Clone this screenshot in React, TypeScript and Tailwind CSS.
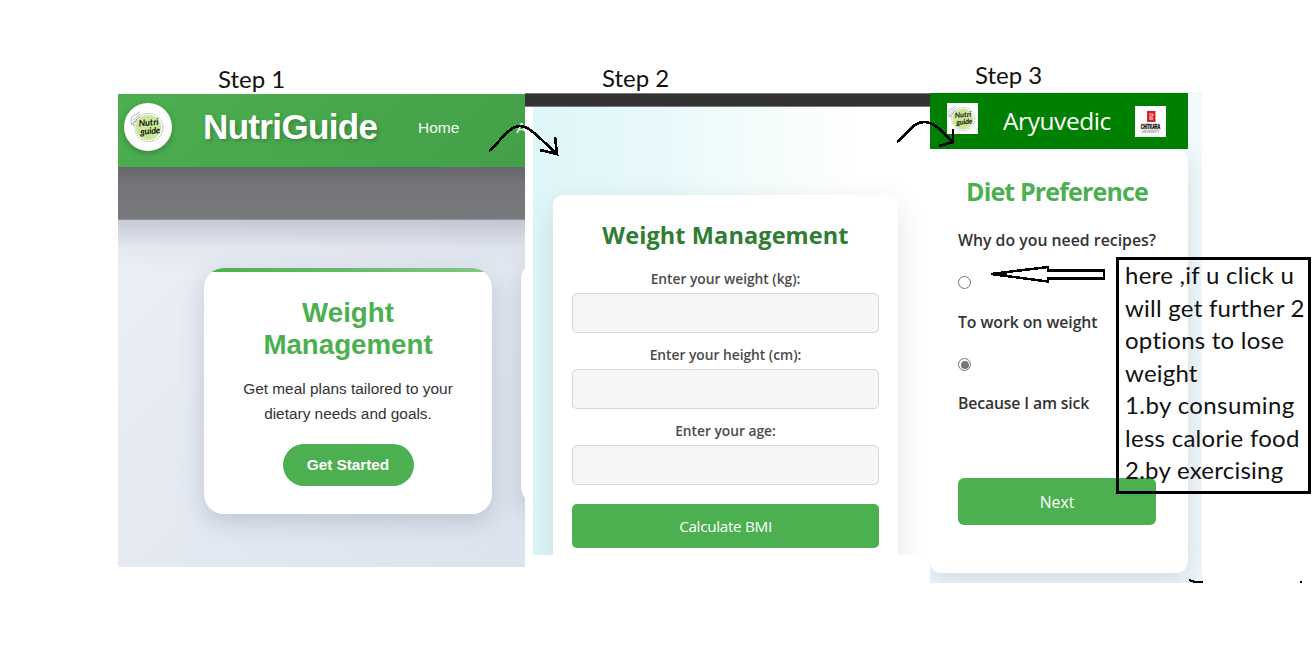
import React from 'react';

const sans = "font-['Open_Sans','Noto_Sans',sans-serif]";
const hand = "font-['Lato',sans-serif]";

function StepLabel({ className, children }: { className: string; children: React.ReactNode }) {
  return (
    <div className={`${hand} whitespace-nowrap text-[24px] leading-8 text-[#111] ${className}`}>{children}</div>
  );
}

function NutriLogo({ className }: { className: string }) {
  return (
    <svg viewBox="0 0 40 40" className={className}>
      <circle cx="21" cy="20.500" r="14.800" fill="none" stroke="#888" strokeWidth=".7" strokeDasharray="2 1" />
      <circle cx="20.500" cy="20.500" r="13.300" fill="#cbe89a" />
      <path d="M3 18C1 12 3 8 6 7M3 17l6-4M4 13l8-7M6 8l5-4M5 19C3 15 8 12 12 9" fill="none" stroke="#999" strokeWidth=".8" />
      <g className="font-['Lato',cursive]" fontWeight="700" fontStyle="italic" fill="#111" textAnchor="middle" transform="rotate(-5 21 20)">
        <text x="21" y="18.500" fontSize="9.500" textLength="21">Nutri</text>
        <text x="22" y="27.500" fontSize="9.500" textLength="21">guide</text>
      </g>
    </svg>
  );
}

function UniversityLogo() {
  return (
    <svg viewBox="0 0 31 31" className="size-[31px] bg-white">
      <rect x="12" y="5" width="8.500" height="11" fill="#d91f2b" />
      <path d="M14 8h4v2h-3v2h3M14 13h4" fill="none" stroke="#fff" strokeWidth=".8" />
      <g className="font-['Liberation_Sans',sans-serif]" textAnchor="middle">
        <text x="15.500" y="22.600" fontSize="6.300" fontWeight="700" fill="#111" stroke="#111" strokeWidth=".4" textLength="19.500" lengthAdjust="spacingAndGlyphs">CHITKARA</text>
        <text x="15.500" y="26.800" fontSize="4.300" fill="#555" textLength="18" lengthAdjust="spacingAndGlyphs">UNIVERSITY</text>
      </g>
    </svg>
  );
}

function HomePanel() {
  return (
    <section className="flex h-[473px] w-[407px] flex-col overflow-hidden bg-[linear-gradient(135deg,#eef1f7,#dce3ee)] font-['Liberation_Sans',Arial,sans-serif]">
      <header className="flex h-[72.500px] shrink-0 items-center bg-[linear-gradient(135deg,#4caf50,#43a047)] pl-1.5 pb-1.5">
        <div className="flex size-12 shrink-0 items-center justify-center rounded-full bg-white shadow-[0_2px_6px_rgba(0,0,0,0.25)]">
          <NutriLogo className="size-[38px]" />
        </div>
        <h1 className="ml-[31px] w-[215px] shrink-0 text-[35px] leading-10 font-bold tracking-[-0.65px] text-white [text-shadow:2px_2px_4px_rgba(0,0,0,0.22)]">NutriGuide</h1>
        <nav className="flex shrink-0 gap-[57px] text-[15.500px] text-[#f3f9f3]">
          <a>Home</a>
          <a>A</a>
        </nav>
      </header>
      <div className="h-[53px] shrink-0 border-b border-[#909399] bg-[linear-gradient(180deg,#65676b,#737579_35%,#77797d)]" />
      <div className="flex grow gap-[29px] bg-[linear-gradient(180deg,rgba(145,150,165,0.42),rgba(180,185,200,0.12)_28px,transparent_50px)] pt-12 pl-[86px]">
        <article className="flex h-[246px] w-[288px] shrink-0 flex-col items-center overflow-hidden rounded-[20px] bg-white shadow-[0_8px_25px_rgba(70,85,110,0.23)]">
          <div className="h-[4.500px] w-full shrink-0 bg-[linear-gradient(90deg,#4caf50,#81c784)]" />
          <h2 className="mt-[25px] text-center text-[27.700px] leading-8 font-bold text-[#4caf50]">Weight<br />Management</h2>
          <p className="mt-[15px] text-center text-[15.400px] leading-[25px] text-[#333]">Get meal plans tailored to your<br />dietary needs and goals.</p>
          <button className="mt-[18px] h-[42px] w-[131px] shrink-0 rounded-full bg-[#4caf50] text-[15.400px] font-bold tracking-[-0.05px] text-white">Get Started</button>
        </article>
        <article className="mt-[-8px] h-[246px] w-[288px] shrink-0 rounded-[20px] bg-white shadow-[0_8px_25px_rgba(70,85,110,0.23)]" />
      </div>
    </section>
  );
}

function Field({ label }: { label: string }) {
  return (
    <label className="flex h-[76px] flex-col items-center">
      <span className="h-[25px] text-[13.800px] leading-[22px] font-semibold tracking-[-0.020px] whitespace-nowrap text-[#4b4b4b]">{label}</span>
      <input className="h-10 w-full rounded-[5px] border border-[#d6d6d6] bg-[#f6f6f6]" />
    </label>
  );
}

function BmiPanel() {
  return (
    <section className={`w-[405px] ${sans}`}>
      <div className="h-3.5 border-y border-[#777] bg-[#333]" />
      <div className="ml-2 h-[448px] overflow-hidden bg-[linear-gradient(90deg,#dff6f9,#e8f9fc_33%,#f4fcfc_55%,#fff_82%)] pt-[88px] pl-5">
        <form className="flex h-[380px] w-[345px] flex-col rounded-t-[10px] bg-white px-[19px] pt-6 shadow-[0_8px_28px_rgba(0,50,50,0.12)]">
          <h2 className="mb-[16px] h-[33px] text-center text-[23.500px] leading-[33px] font-bold tracking-[0.100px] whitespace-nowrap text-[#2e7d32]">Weight Management</h2>
          <Field label="Enter your weight (kg):" />
          <Field label="Enter your height (cm):" />
          <Field label="Enter your age:" />
          <button className="mt-[8px] h-11 shrink-0 rounded-[5px] bg-[#4caf50] pt-px text-[15.300px] tracking-[-0.330px] text-white">Calculate BMI</button>
        </form>
      </div>
    </section>
  );
}

function Radio({ checked }: { checked?: boolean }) {
  return (
    <span className="flex size-[13px] items-center justify-center rounded-full border border-[#767676] bg-white">
      {checked && <span className="size-[8px] rounded-full bg-[#767676]" />}
    </span>
  );
}

function DietPanel() {
  return (
    <section className={`h-[491px] w-[272px] overflow-hidden bg-[linear-gradient(180deg,#f2fafd,#eff6fb)] pt-px ${sans}`}>
      <header className="flex h-14 w-[258px] items-center bg-[#008000] text-white">
        <div className="mb-[5px] ml-[17px] size-[31px] bg-white">
          <NutriLogo className="size-[31px]" />
        </div>
        <h1 className="ml-[25px] w-[132px] text-[24.500px] leading-9 tracking-[-0.420px]">Aryuvedic</h1>
        <UniversityLogo />
      </header>
      <div className="flex h-[424px] w-[258px] flex-col rounded-r-[12px] rounded-bl-[10px] bg-white pl-7 text-[15.800px] leading-6 font-semibold text-[#333] shadow-[0_7px_24px_rgba(40,65,85,0.15)]">
        <h2 className="mt-[25px] ml-2 h-[34px] text-[25px] leading-[34px] font-bold tracking-[-0.850px] whitespace-nowrap text-[#4caf50]">Diet Preference</h2>
        <p className="mt-[20px] mb-[24px] tracking-[0.020px] whitespace-nowrap">Why do you need recipes?</p>
        <Radio />
        <p className="mt-[21px] mb-[24px] tracking-[-0.050px]">To work on weight</p>
        <Radio checked />
        <p className="mt-[20px] tracking-[-0.150px]">Because I am sick</p>
        <button className="mt-[63px] h-[47px] w-[198px] rounded-[6px] bg-[#4caf50] pt-px text-[15.800px] font-normal text-white">Next</button>
      </div>
    </section>
  );
}

function Annotations() {
  return (
    <svg className="pointer-events-none absolute inset-0 h-[659px] w-[1315px]" viewBox="0 0 1315 659" fill="none" stroke="#000" strokeWidth="2.700" shapeRendering="crispEdges">
      <path d="M489 151C500 142 509 126 520 126C530 126 541 140 557 154M555 137L557 154L540 150" />
      <path d="M897 142C906 135 913 122 924 122C935 122 943 133 953 142M953 129L953 142L939 146" />
      <path d="M991 274L1048 267V270.500H1104V278.500H1048V281.500Z" strokeWidth="2.500" />
      <path d="M992 274l14-1v3z" fill="#000" strokeWidth="1" />
      <path d="M1189 580l6 2h8M1300 582h2" strokeWidth="2" />
    </svg>
  );
}

function Callout() {
  const lines = [
    { text: 'here ,if u click u', track: 'tracking-[0.280px]' },
    { text: 'will get further 2', track: 'tracking-[0.250px]' },
    { text: 'options to lose', track: 'tracking-[0.250px]' },
    { text: 'weight', track: 'tracking-[0.200px]' },
    { text: '1.by consuming', track: 'tracking-[0.400px]' },
    { text: 'less calorie food', track: 'tracking-[0.280px]' },
    { text: '2.by exercising', track: 'tracking-[0.250px]' },
  ];
  return (
    <aside className={`absolute top-[257px] left-[1116px] h-[237px] w-[195px] border-3 border-black pl-[6px] text-[24px] leading-[32.500px] whitespace-nowrap text-[#111] ${hand}`}>
      <div className="-mt-px">
        {lines.map((l) => <div key={l.text} className={l.track}>{l.text}</div>)}
      </div>
    </aside>
  );
}

export default function App() {
  return (
    <main className="relative flex h-[659px] w-[1315px] items-start overflow-hidden bg-white pl-[118px]">
      <div className="w-[407px] shrink-0 pt-[63px]">
        <StepLabel className="-mb-px pl-[100px]">Step 1</StepLabel>
        <HomePanel />
      </div>
      <div className="w-[405px] shrink-0 pt-[62px]">
        <StepLabel className="-mb-px pl-[77px]">Step 2</StepLabel>
        <BmiPanel />
      </div>
      <div className="w-[272px] shrink-0 pt-[59px]">
        <StepLabel className="mb-px pl-[45px]">Step 3</StepLabel>
        <DietPanel />
      </div>
      <Annotations />
      <Callout />
    </main>
  );
}
